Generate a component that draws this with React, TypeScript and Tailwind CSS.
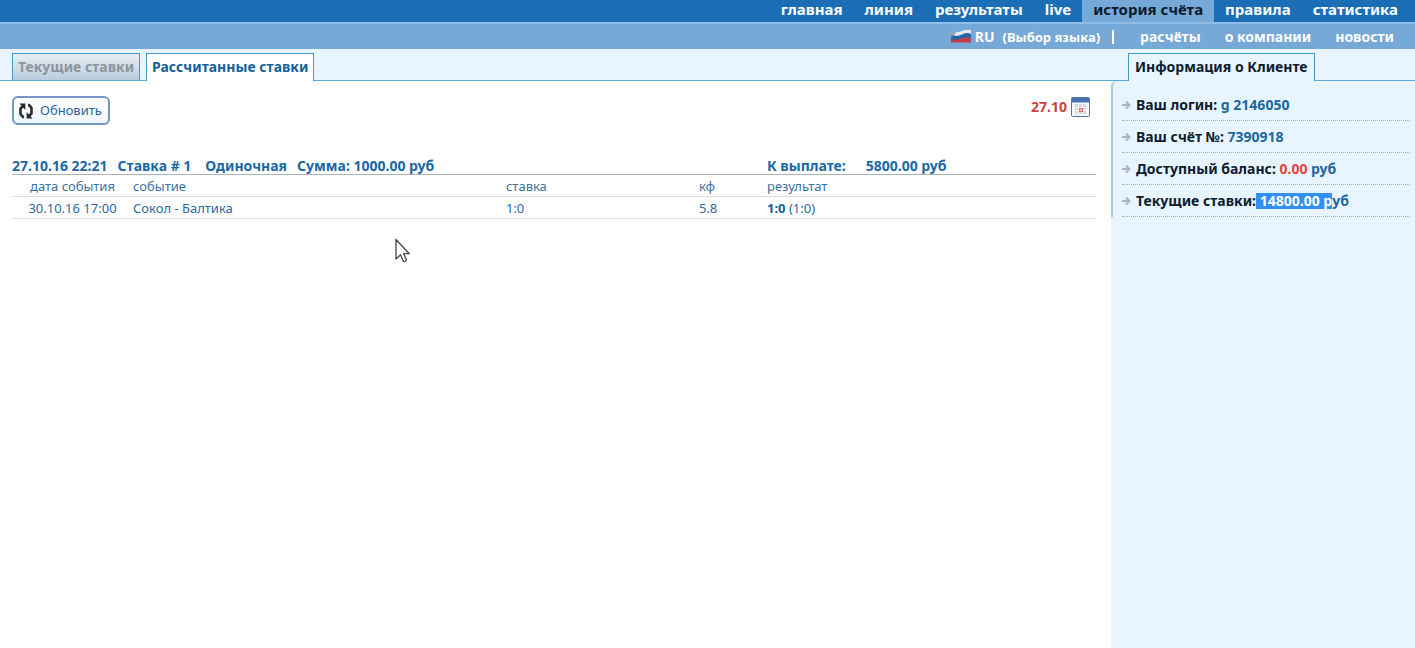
import React from 'react';

interface NavItem {
  label: string;
  active?: boolean;
}

interface Bet {
  date: string;
  event: string;
  pick: string;
  odds: string;
  score: string;
  details: string;
}

const mainNav: NavItem[] = [
  { label: 'главная' },
  { label: 'линия' },
  { label: 'результаты' },
  { label: 'live' },
  { label: 'история счёта', active: true },
  { label: 'правила' },
  { label: 'статистика' }
];

const subNav: NavItem[] = [
  { label: 'расчёты' },
  { label: 'о компании' },
  { label: 'новости' }
];

const bets: Bet[] = [
  { date: '30.10.16 17:00', event: 'Сокол - Балтика', pick: '1:0', odds: '5.8', score: '1:0', details: '(1:0)' }
];

const FlagIcon = () => (
  <svg width="20" height="14" viewBox="0 0 20 14" className="shrink-0" aria-hidden="true">
    <path d="M1 2 Q6 3 11 1 T20 0 V5 Q15 4 10 6 T.500 6 Z" fill="#e4ebf5" />
    <path d="M.500 5 Q6 7 11 4.500 T20 4 V9 Q14 8 9.500 10 T0 10 Z" fill="#2563b0" />
    <path d="M0 9 Q5 10.500 10 8.500 T20 8 V12.500 H0 Z" fill="#c03f4c" />
    <path d="M1 2 L5 2.300 L2 9 L0 10 Z" fill="#5f5f78" opacity=".500" />
  </svg>
);

const RefreshIcon = () => (
  <svg width="16" height="16" viewBox="0 0 16 16" className="shrink-0" aria-hidden="true">
    <path d="M6 14 H5 L2.500 11 V5.500 L5 3" fill="none" stroke="#2b2b2b" strokeWidth="2.600" />
    <path d="M1.500 .500 H7.300 V7 Z" fill="#2b2b2b" />
    <path d="M10 2 H11 L13.500 5 V10.500 L11 13" fill="none" stroke="#2b2b2b" strokeWidth="2.600" />
    <path d="M14.500 15.500 H8.700 V9 Z" fill="#2b2b2b" />
  </svg>
);

const CalendarIcon = () => (
  <svg width="19" height="20" viewBox="0 0 19 20" aria-hidden="true">
    <rect x=".500" y=".500" width="18" height="19" rx="1" fill="#f4f7fd" stroke="#5272ae" />
    <rect x="1" y="1" width="17" height="4" fill="#4a70b5" />
    <rect x="1" y="5" width="17" height="1" fill="#9db4dc" />
    <rect x="4" y="7" width="11" height="10" fill="#d5d7df" />
    <path d="M4 10.500 H15 M4 13.500 H15 M7.500 7 V17 M11.500 7 V17" stroke="#fff" />
    <rect x="8" y="11" width="4" height="4" fill="#dc7358" />
    <rect x="9" y="12" width="2" height="2" fill="#f5c4a8" />
  </svg>
);

const ArrowBullet = () => (
  <svg width="9" height="10" viewBox="0 0 9 10" className="shrink-0" aria-hidden="true">
    <path d="M0 5 H7 M4 1.500 L7.500 5 L4 8.500" fill="none" stroke="#a9b4bf" strokeWidth="2" />
  </svg>
);

const PointerIcon = () => (
  <svg width="16" height="26" viewBox="0 0 16 26" aria-hidden="true">
    <path d="M1 1.500 V21 L5.500 16.700 L8.500 23.500 Q10.500 24 11.500 22 L8.700 15.700 H14.300 Z" fill="#fff" stroke="#45454f" strokeWidth="1.300" strokeLinejoin="round" />
  </svg>
);

const Header = () => (
  <header className="font-bold text-white">
    <nav className="flex h-6 justify-end border-b-2 border-[#8fbde6] bg-[#1b6eb6] pr-[6px] text-[15px] leading-[18px]">
      {mainNav.map(item => (
        <a
          key={item.label}
          href="#"
          className={`px-[11px] ${item.active ? 'bg-[#76a8d8] text-[#0c1a2c]' : ''}`}
        >
          {item.label}
        </a>
      ))}
    </nav>
    <nav className="flex h-[25px] items-center justify-end bg-[#76a8d8] pr-[9px] text-sm leading-5">
      <a href="#" className="flex items-center">
        <FlagIcon />
        <span className="ml-1">RU</span>
        <span className="ml-2 text-[13px]">(Выбор языка)</span>
      </a>
      <span className="mr-[14px] ml-3 h-[14px] w-[2px] bg-white" />
      {subNav.map(item => (
        <a key={item.label} href="#" className="px-3">{item.label}</a>
      ))}
    </nav>
  </header>
);

const BetsTable = () => (
  <table className="mt-[29px] w-full table-fixed border-collapse text-left text-[13px] leading-4">
    <colgroup>
      <col className="w-[121px]" />
      <col />
      <col className="w-[193px]" />
      <col className="w-[68px]" />
      <col className="w-[329px]" />
    </colgroup>
    <thead>
      <tr className="h-5 border-b border-[#a9b3bc] text-sm leading-4 text-[#1c68a5]">
        <th colSpan={4} className="p-0 pt-1 whitespace-nowrap">
          <span>27.10.16 22:21</span>
          <span className="ml-[10px]">Ставка # 1</span>
          <span className="ml-[14px]">Одиночная</span>
          <span className="ml-[10px]">Сумма: 1000.00 руб</span>
        </th>
        <th className="p-0 pt-1 whitespace-nowrap">
          <span>К выплате:</span>
          <span className="ml-5">5800.00 руб</span>
        </th>
      </tr>
      <tr className="h-[22px] border-b border-[#dcdfe2] text-[#3a73a3]">
        <th className="p-0 text-center font-normal">дата события</th>
        <th className="p-0 font-normal">событие</th>
        <th className="p-0 font-normal">ставка</th>
        <th className="p-0 font-normal">кф</th>
        <th className="p-0 font-normal">результат</th>
      </tr>
    </thead>
    <tbody>
      {bets.map(bet => (
        <tr key={bet.date} className="h-[22px] border-b border-[#dcdfe2] text-[#2c6a9e]">
          <td className="p-0 text-center">{bet.date}</td>
          <td className="p-0">{bet.event}</td>
          <td className="p-0">{bet.pick}</td>
          <td className="p-0">{bet.odds}</td>
          <td className="p-0"><b className="text-[#125f9e]">{bet.score}</b> {bet.details}</td>
        </tr>
      ))}
    </tbody>
  </table>
);

const ClientInfo = () => (
  <aside className="w-[304px] shrink-0 bg-[#e8f4ff] text-sm font-bold text-[#0d1d2d]">
    <div className="flex h-8 items-end">
      <div className="h-px w-[17px] bg-[#59abd8]" />
      <h2 className="h-7 border border-b-0 border-[#3f9bcf] px-[6px] leading-[26px] whitespace-nowrap">Информация о Клиенте</h2>
      <div className="h-px flex-1 bg-[#59abd8]" />
    </div>
    <ul className="rounded-tl-md border-l-2 border-[#9bcdea] pt-2 pr-[5px] pl-[9px] text-[#1c689f]">
      <li className="flex h-8 items-center gap-[5px] border-b border-dotted border-[#9aabba]">
        <ArrowBullet />
        <span><span className="text-[#0d1d2d]">Ваш логин:</span> g 2146050</span>
      </li>
      <li className="flex h-8 items-center gap-[5px] border-b border-dotted border-[#9aabba]">
        <ArrowBullet />
        <span><span className="text-[#0d1d2d]">Ваш счёт №:</span> 7390918</span>
      </li>
      <li className="flex h-8 items-center gap-[5px] border-b border-dotted border-[#9aabba]">
        <ArrowBullet />
        <span><span className="text-[#0d1d2d]">Доступный баланс:</span> <span className="text-[#e2473f]">0.00</span> руб</span>
      </li>
      <li className="flex h-8 items-center gap-[5px] border-b border-dotted border-[#9aabba]">
        <ArrowBullet />
        <span className="flex leading-4 whitespace-pre">
          <span className="text-[#0d1d2d]">Текущие ставки:</span>
          <mark className="bg-[#3390f5] text-white"> 14800.00 р</mark>
          <span>уб</span>
        </span>
      </li>
    </ul>
  </aside>
);

export default function App() {
  return (
    <div className="relative flex min-h-screen flex-col bg-white font-['Noto_Sans','DejaVu_Sans_Condensed',sans-serif]">
      <Header />
      <div className="flex flex-1">
        <main className="min-w-0 flex-1">
          {/* Tabs */}
          <div className="flex h-8 items-end border-b border-[#59abd8] bg-[#e8f4ff] pl-3 text-sm leading-5 font-bold">
            <button className="h-[27px] border border-b-0 border-[#3f9bcf] bg-linear-to-b from-[#e9edf1] to-[#b9cde0] px-[5px] whitespace-nowrap text-[#8d949c]">
              Текущие ставки
            </button>
            <button className="-mb-px ml-[6px] h-7 border border-b-0 border-[#3f9bcf] bg-white px-[5px] pb-[2px] whitespace-nowrap text-[#155f9c]">
              Рассчитанные ставки
            </button>
          </div>

          <div className="pt-[15px] pr-[15px] pl-3">
            <div className="flex items-start justify-between">
              <button className="flex h-[29px] items-center gap-[6px] rounded-md border-2 border-[#6f98c6] bg-linear-to-b from-white to-[#f1f7fe] px-1 pr-[6px] text-[13px] text-[#2e6596]">
                <RefreshIcon />
                Обновить
              </button>
              <button className="flex items-center gap-1 pt-px pr-[6px] text-sm leading-4 font-bold text-[#c8443f]">
                27.10
                <CalendarIcon />
              </button>
            </div>
            <BetsTable />
          </div>
        </main>
        <ClientInfo />
      </div>
      <div className="pointer-events-none absolute top-[238px] left-[395px]">
        <PointerIcon />
      </div>
    </div>
  );
}
